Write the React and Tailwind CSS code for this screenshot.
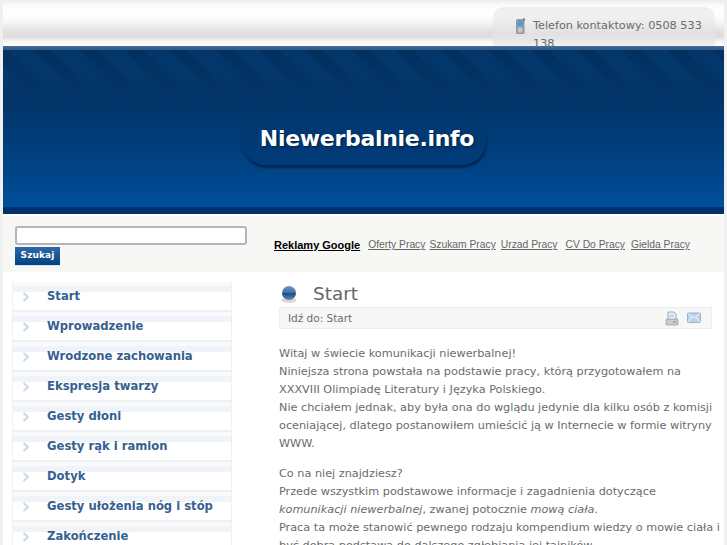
import React from "react";

const MENU = [
  "Start",
  "Wprowadzenie",
  "Wrodzone zachowania",
  "Ekspresja twarzy",
  "Gesty dłoni",
  "Gesty rąk i ramion",
  "Dotyk",
  "Gesty ułożenia nóg i stóp",
  "Zakończenie",
];

const ADS = [
  { label: "Oferty Pracy", cls: "ml-[8px]" },
  { label: "Szukam Pracy", cls: "ml-[4px]" },
  { label: "Urzad Pracy", cls: "ml-[5px]" },
  { label: "CV Do Pracy", cls: "ml-[8px]" },
  { label: "Gielda Pracy", cls: "ml-[6px]" },
];

function PhoneIcon() {
  return (
    <svg width="11" height="16" viewBox="0 0 11 16" className="shrink-0">
      <rect x="1.5" y="1.5" width="7.5" height="14" rx="1" fill="#9a9a9a" stroke="#777" strokeWidth="0.6" />
      <rect x="2.6" y="3" width="5.2" height="5" fill="#3fa0f0" />
      <rect x="2.8" y="9.5" width="4.8" height="5" fill="#c4c4c4" />
      <rect x="8.5" y="0" width="1.2" height="3" fill="#666" />
    </svg>
  );
}

function Chevron() {
  return (
    <svg width="8" height="10" viewBox="0 0 8 10" className="shrink-0">
      <path d="M1.5 1 L6 5 L1.5 9" fill="none" stroke="#c5d9ec" strokeWidth="2" />
    </svg>
  );
}

function Ball() {
  return (
    <svg width="18" height="22" viewBox="0 0 18 22">
      <defs>
        <linearGradient id="ball" x1="0" y1="0" x2="0" y2="1">
          <stop offset="0" stopColor="#6f97c9" />
          <stop offset="0.48" stopColor="#3f6fa8" />
          <stop offset="0.52" stopColor="#1f4c80" />
          <stop offset="1" stopColor="#5a8bc2" />
        </linearGradient>
      </defs>
      <ellipse cx="9" cy="16" rx="7.5" ry="3" fill="#d8d8d8" />
      <circle cx="9" cy="9" r="7" fill="url(#ball)" />
    </svg>
  );
}

function PrintIcon() {
  return (
    <svg width="14" height="15" viewBox="0 0 14 15">
      <path d="M3 1 H9 L11 3 V9 H3 Z" fill="#eaf1f9" stroke="#7d97b5" strokeWidth="0.8" />
      <rect x="1" y="8" width="12" height="6" rx="1" fill="#c6cdd6" stroke="#8a94a0" strokeWidth="0.7" />
      <rect x="8" y="10.5" width="3" height="1" fill="#c9744a" />
      <path d="M4.5 4 H9 M4.5 5.5 H9" stroke="#9db4cc" strokeWidth="0.7" />
    </svg>
  );
}

function MailIcon() {
  return (
    <svg width="14" height="12" viewBox="0 0 14 12">
      <rect x="0.5" y="1" width="13" height="9.5" rx="1" fill="#b9d3ec" stroke="#86a6c6" strokeWidth="0.8" />
      <path d="M1 1.5 L7 6 L13 1.5 M1 10 L5 5 M13 10 L9 5" fill="none" stroke="#f4f8fc" strokeWidth="0.9" />
    </svg>
  );
}

export default function App() {
  return (
    <div className="h-[545px] overflow-hidden bg-[#f0f0f0] px-[3px] font-['DejaVu_Sans',sans-serif] text-[11.25px] text-[#6b6b6b]">
      <div className="h-full bg-white">
        {/* top strip */}
        <div className="flex h-[46px] justify-end overflow-hidden bg-[linear-gradient(#ececec_0px,#fbfbfb_5px,#ffffff_15px,#f6f6f6_22px,#e2e2e2_31px,#dcdcdc_37px,#f0f0f0_40px,#ffffff_46px)] pr-[9px] pt-[7px]">
          <div className="flex h-[60px] w-[222px] rounded-t-[10px] bg-[linear-gradient(#eeeeee_0px,#f0f0f0_10px,#e2e2e2_26px,#e6e6e6_33px,#f2f2f2_39px)] pl-[22px] pt-[10px] leading-[18px]">
            <div className="pt-[1px]"><PhoneIcon /></div>
            <div className="ml-[7px] w-[178px]">Telefon kontaktowy: 0508 533 138</div>
          </div>
        </div>

        {/* banner */}
        <div className="relative flex h-[168px] flex-col bg-[linear-gradient(#033466_0px,#03356a_60px,#004487_125px,#004f9c_160px)]">
          <div className="h-[4px] bg-[linear-gradient(#4d7095,#3a6290_40%,#2f5a88)]" />
          <div className="h-[60px] bg-[linear-gradient(to_bottom,transparent,#03356a),repeating-linear-gradient(45deg,#02315f_0px,#02315f_13px,#03366b_13px,#03366b_32px)]" />
          <div className="flex flex-1 items-start justify-center pt-[5px]">
            <div className="flex h-[50px] w-[245px] items-center justify-center rounded-[25px] bg-[linear-gradient(#03386f,#003b7a)] pb-[4px] pl-[7px] shadow-[1px_3px_2px_#012650]">
              <span className="text-[22px] font-bold tracking-[-0.3px] text-white [text-shadow:1px_1px_2px_#001f45]">Niewerbalnie.info</span>
            </div>
          </div>
          <div className="h-[7px] bg-[#00316b]" />
        </div>

        {/* search and ads */}
        <div className="mt-[2px] flex h-[56px] bg-[#f7f7f5] pl-[12px] pt-[10px]">
          <div className="w-[232px]">
            <input className="block h-[19px] w-[232px] rounded-[3px] border-2 border-[#b5b5b5] bg-white" />
            <button className="mt-[2px] block h-[19px] w-[45px] border-b border-[#d5deea] bg-[linear-gradient(#2f6aa8,#00417f)] text-[9px] font-bold tracking-[0.1px] text-white">Szukaj</button>
          </div>
          <div className="ml-[27px] flex h-[38px] items-center font-['Liberation_Sans',sans-serif] text-[10.3px]">
            <a className="text-[11px] font-bold text-black underline">Reklamy Google</a>
            {ADS.map((ad) => (
              <a key={ad.label} className={`${ad.cls} text-[#666] underline`}>{ad.label}</a>
            ))}
          </div>
        </div>

        {/* main */}
        <div className="flex pl-[9px] pt-[10px]">
          <div className="w-[220px] shrink-0">
            {MENU.map((item) => (
              <div key={item} className="flex h-[30px] items-center border-x border-b-2 border-[#f0f0f0] bg-[linear-gradient(#f8fafc_0px,#f8fafc_4px,#f0f4f8_4px,#f0f4f8_10px,#ffffff_10px)] pl-[9px] pt-[1px]">
                <Chevron />
                <span className="ml-[17px] text-[11.6px] font-bold text-[#365f8f]">{item}</span>
              </div>
            ))}
          </div>
          <div className="ml-[47px] w-[444px] leading-[18px]">
            <div className="flex h-[25px] items-center pl-[1px]">
              <Ball />
              <h1 className="mb-[2px] ml-[15px] text-[18.4px] text-[#666]">Start</h1>
            </div>
            <div className="flex h-[22px] w-[433px] items-center justify-between border border-[#eeeeee] bg-[#f7f7f5] pl-[8px] pr-[10px] text-[10.5px]">
              <span>Idź do: Start</span>
              <div className="flex items-center gap-[8px]">
                <PrintIcon />
                <MailIcon />
              </div>
            </div>
            <p className="mt-[16px]">
              Witaj w świecie komunikacji niewerbalnej!<br />
              Niniejsza strona powstała na podstawie pracy, którą przygotowałem na XXXVIII Olimpiadę Literatury i Języka Polskiego.<br />
              Nie chciałem jednak, aby była ona do wglądu jedynie dla kilku osób z komisji oceniającej, dlatego postanowiłem umieścić ją w Internecie w formie witryny WWW.
            </p>
            <p className="mt-[12px]">
              Co na niej znajdziesz?<br />
              Przede wszystkim podstawowe informacje i zagadnienia dotyczące <em>komunikacji niewerbalnej</em>, zwanej potocznie <em>mową ciała</em>.<br />
              Praca ta może stanowić pewnego rodzaju kompendium wiedzy o mowie ciała i być dobrą podstawą do dalszego zgłębiania jej tajników.
            </p>
          </div>
        </div>
      </div>
    </div>
  );
}
